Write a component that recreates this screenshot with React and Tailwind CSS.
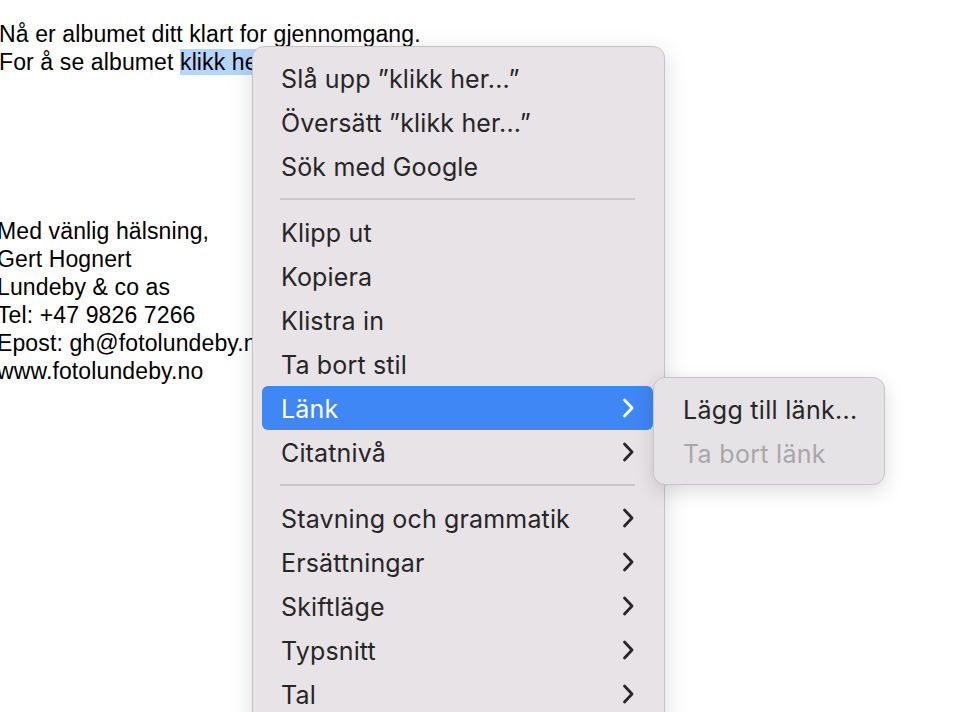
import React from "react";

function Chevron({ white }) {
  return (
    <svg width="12" height="20" viewBox="0 0 12 20" className="shrink-0">
      <path
        d="M2.5 2 L10 10 L2.5 18"
        fill="none"
        stroke={white ? "#ffffff" : "#262626"}
        strokeWidth="2.8"
        strokeLinecap="round"
        strokeLinejoin="round"
      />
    </svg>
  );
}

function Item({ label, sub, active }) {
  return (
    <div
      className={
        "h-[44px] flex items-center justify-between pl-[19px] pr-[19px] rounded-[6px] " +
        (active ? "bg-[#3f87f4] text-white" : "text-[#262626]")
      }
    >
      <span className="pt-[3px]">{label}</span>
      {sub && <Chevron white={active} />}
    </div>
  );
}

function Sep() {
  return (
    <div className="h-[22px] flex items-center px-[18px]">
      <div className="h-[2px] w-full bg-[#cbc7cb]" />
    </div>
  );
}

export default function App() {
  return (
    <div className="relative w-[976px] h-[712px] overflow-hidden bg-white">
      <div
        className="pt-[21px] text-[23px] tracking-[0.12px] leading-[27.9px] text-black"
        style={{ fontFamily: '"Liberation Sans", Arial, sans-serif' }}
      >
        <div className="ml-[-1px]">Nå er albumet ditt klart for gjennomgang.</div>
        <div className="ml-[-1px]">
          For å se albumet <span className="bg-[#b4d5fe]">klikk her...</span>
        </div>
        <div className="h-[141.5px]" />
        <div className="ml-[-3px]">
          <div>Med vänlig hälsning,</div>
          <div>Gert Hognert</div>
          <div>Lundeby &amp; co as</div>
          <div>Tel: +47 9826 7266</div>
          <div>Epost: gh@fotolundeby.no</div>
          <div>www.fotolundeby.no</div>
        </div>
      </div>

      <div
        className="absolute left-[252px] top-[46px] w-[413px] h-[700px] rounded-[12px] bg-[#e8e3e7] border border-[#c6c3c6] shadow-[0_6px_24px_rgba(0,0,0,0.14)] pt-[9px] pl-[9px] pr-[11px] text-[25px] tracking-[0.15px]"
        style={{ fontFamily: "Inter, 'Noto Sans', sans-serif" }}
      >
        <Item label={"Slå upp ”klikk her...”"} />
        <Item label={"Översätt ”klikk her...”"} />
        <Item label="Sök med Google" />
        <Sep />
        <Item label="Klipp ut" />
        <Item label="Kopiera" />
        <Item label="Klistra in" />
        <Item label="Ta bort stil" />
        <Item label="Länk" sub active />
        <Item label="Citatnivå" sub />
        <Sep />
        <Item label="Stavning och grammatik" sub />
        <Item label="Ersättningar" sub />
        <Item label="Skiftläge" sub />
        <Item label="Typsnitt" sub />
        <Item label="Tal" sub />
      </div>

      <div
        className="absolute left-[653px] top-[377px] w-[232px] rounded-[12px] bg-[#e6e3e6] border border-[#c6c3c6] shadow-[0_6px_20px_rgba(0,0,0,0.14)] py-[9px] px-[9px] text-[25px] tracking-[0.3px]"
        style={{ fontFamily: "Inter, 'Noto Sans', sans-serif" }}
      >
        <div className="h-[44px] flex items-center pl-[20px] pt-[3px] text-[#262626]">Lägg till länk...</div>
        <div className="h-[44px] flex items-center pl-[20px] pt-[3px] text-[#a9a6a9]">Ta bort länk</div>
      </div>
    </div>
  );
}
